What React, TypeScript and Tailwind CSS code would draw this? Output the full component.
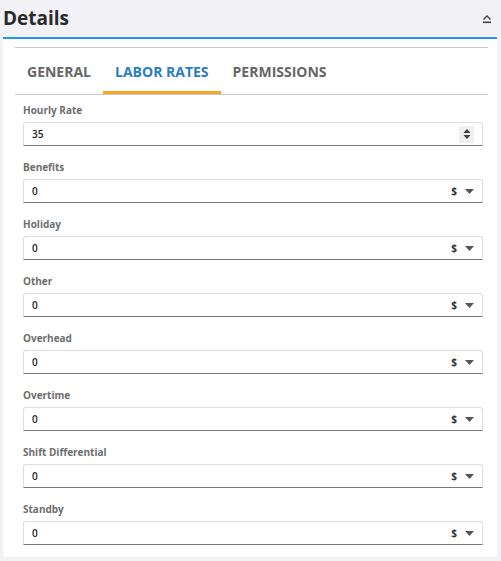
import React from 'react'

const fields = [
  'Benefits',
  'Holiday',
  'Other',
  'Overhead',
  'Overtime',
  'Shift Differential',
  'Standby',
]

const tabs = ['General', 'Labor Rates', 'Permissions']

const CollapseIcon = () => (
  <svg width="10" height="10" viewBox="0 0 10 10" className="text-[#444]">
    <path d="M1.5 5.5 L5 2 L8.5 5.5" fill="none" stroke="currentColor" strokeWidth="1.4" />
    <rect x="1" y="7.5" width="8" height="1.6" fill="currentColor" />
  </svg>
)

const SpinIcon = () => (
  <div className="w-[15px] h-[17px] bg-[#efefef] flex items-center justify-center">
    <svg width="8" height="12" viewBox="0 0 8 12">
      <path d="M0.5 5 L4 1 L7.5 5 Z" fill="#3a3a3a" />
      <path d="M0.5 7 L4 11 L7.5 7 Z" fill="#3a3a3a" />
    </svg>
  </div>
)

const CurrencySelect = () => (
  <div className="flex items-center gap-[8px] text-[10px] font-bold text-[#333]">
    <span>$</span>
    <svg width="9" height="5" viewBox="0 0 9 5">
      <path d="M0 0 L9 0 L4.5 5 Z" fill="#555" />
    </svg>
  </div>
)

const Field = ({ label, value, spin }: { label: string; value: string; spin?: boolean }) => (
  <div className="flex flex-col">
    <label className="h-[14px] leading-[14px] text-[10px] font-bold text-[#6e6e6e]">{label}</label>
    <div className="mt-[5px] h-[24px] flex items-center justify-between pl-[8px] pr-[8px] border border-[#dedede] border-b-[#777] rounded-t-[3px] bg-white">
      <span className="text-[10px] font-semibold text-[#222]">{value}</span>
      {spin ? <SpinIcon /> : <CurrencySelect />}
    </div>
  </div>
)

export default function App() {
  return (
    <div
      className="w-[501px] h-[561px] bg-[#f1f1f6] flex flex-col"
      style={{ fontFamily: '"Open Sans", "Noto Sans", sans-serif' }}
    >
      <div className="h-[37px] flex items-center justify-between pl-[3px] pr-[9px]">
        <h2 className="text-[19px] font-bold text-[#2a2a2a] leading-none">Details</h2>
        <CollapseIcon />
      </div>
      <div className="ml-[3px] mr-[4px] h-[520px] bg-white border-t-2 border-[#2196f3] pl-[12px] pr-[9px] pt-[8px]">
        <div className="border-t border-[#c9c9c9]" />
        <div className="h-[47px] flex items-stretch border-b border-[#c9c9c9]">
          {tabs.map((t, i) => (
            <div
              key={t}
              className={`px-[12px] flex items-center uppercase text-[14px] font-bold ${
                i === 1 ? 'text-[#2a7dc0] border-b-[3px] border-[#f5a623] pt-[3px]' : 'text-[#666]'
              }`}
            >
              {t}
            </div>
          ))}
        </div>
        <div className="pl-[8px] pr-[5px] pt-[8px] flex flex-col gap-[14px]">
          <Field label="Hourly Rate" value="35" spin />
          {fields.map((f) => (
            <Field key={f} label={f} value="0" />
          ))}
        </div>
      </div>
    </div>
  )
}
